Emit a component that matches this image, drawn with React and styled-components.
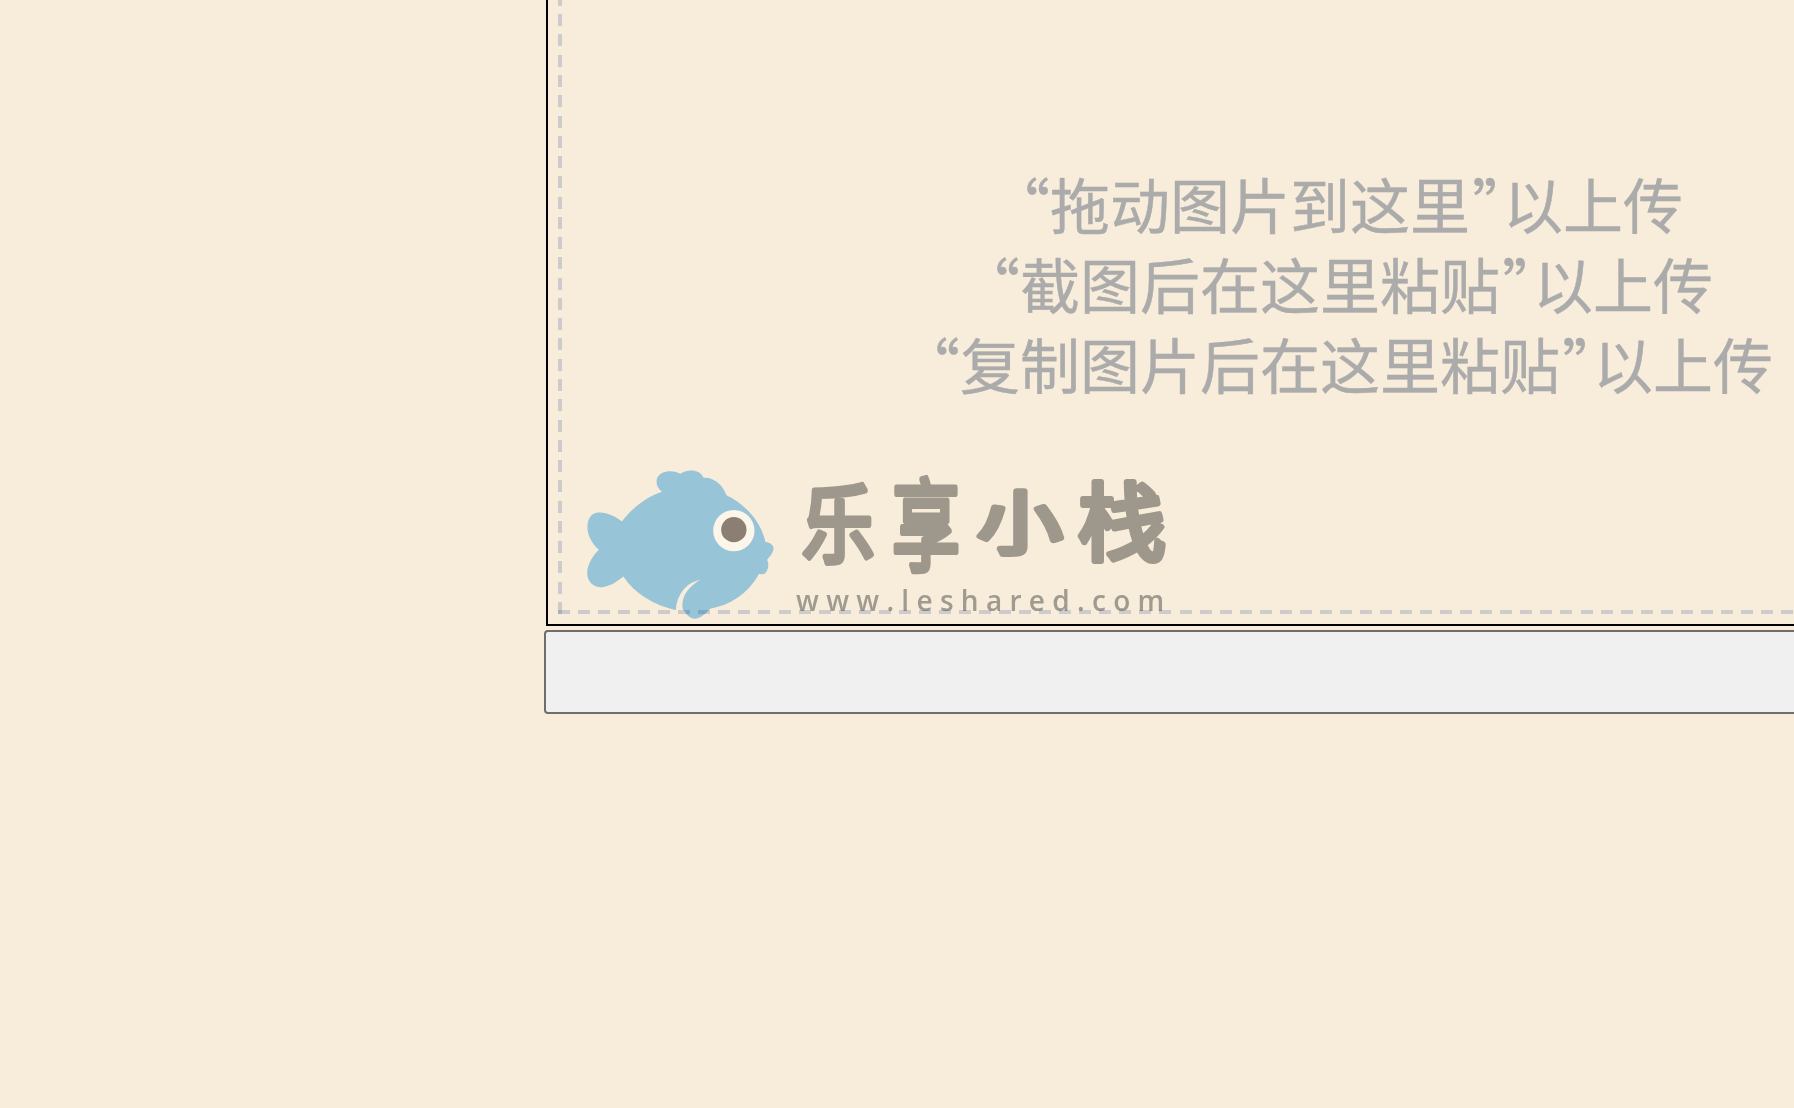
import React from 'react';
import styled, { createGlobalStyle } from 'styled-components';

const GlobalStyle = createGlobalStyle`
  html, body {
    margin: 0;
    height: 100%;
    overflow: hidden;
    background: #f8ecdb;
  }
`;

const Page = styled.div`
  display: flex;
  flex-direction: column;
  align-items: flex-start;
  gap: 4px;
  height: 1108px;
  padding-left: 544px;
  overflow: hidden;
  font-family: "Noto Sans CJK SC", "Noto Sans", sans-serif;
`;

const DropZone = styled.section`
  flex: none;
  box-sizing: border-box;
  width: 1581px;
  height: 626px;
  margin-left: 2px;
  padding: 0 10px 10px;
  border: 2px solid #000;
  border-top: 0;
`;

const DashedArea = styled.div`
  position: relative;
  box-sizing: border-box;
  height: 100%;
  padding: 163px 0 0 29px;

  &::before,
  &::after {
    content: '';
    position: absolute;
    left: 0;
    bottom: 0;
    mix-blend-mode: multiply;
  }
  &::before {
    top: 0;
    width: 4px;
    background: repeating-linear-gradient(to top, #d3dced 0 12px, transparent 12px 20.27px);
  }
  &::after {
    right: 0;
    height: 4px;
    background: repeating-linear-gradient(to right, #d3dced 0 12px, transparent 12px 20.05px);
  }
`;

const Hint = styled.p`
  margin: 0 0 0 -29px;
  font-size: 60px;
  line-height: 80px;
  text-align: center;
  color: #ababab;
  -webkit-text-stroke: 0.4px #ababab;
`;

const CloseQuote = styled.span`
  font-feature-settings: "palt";
  padding-left: 3px;
`;

const Logo = styled.div`
  display: flex;
  align-items: flex-start;
  gap: 22px;
  margin-top: 66px;
`;

const FishMark = styled.svg`
  flex: none;
  display: block;
  width: 187px;
  height: 150px;
`;

const LogoText = styled.div`
  display: flex;
  flex-direction: column;
  margin-top: -4px;
`;

const LogoName = styled.svg`
  display: block;
  width: 370px;
  height: 110px;
  margin: 0 0 10px 4px;
  overflow: visible;
`;

const LogoChar = styled.text`
  font-size: ${(p) => p.$size}px;
  font-weight: 400;
  text-anchor: middle;
  fill: #9e988c;
  stroke: #9e988c;
  stroke-width: 6px;
  stroke-linejoin: round;
  stroke-linecap: round;
`;

const LogoUrl = styled.div`
  font-family: "Open Sans", sans-serif;
  font-size: 28px;
  line-height: 30px;
  font-weight: 600;
  letter-spacing: 7.3px;
  white-space: nowrap;
  color: #a09b90;
`;

const Toolbar = styled.div`
  flex: none;
  box-sizing: border-box;
  width: 1620px;
  height: 84px;
  background: #f0f0f1;
  border: 2px solid #706d6a;
  border-radius: 4px;
`;

const Fish = () => (
  <FishMark viewBox="172 86 560 450">
    <g fill="#97c4d6">
      <path d="M275 245C305 205 345 172 395 155L590 165C650 195 695 245 708 310C708 350 700 380 688 400C655 460 600 495 540 505L440 510C370 495 315 460 280 408Z" />
      <path d="M285 250C255 225 222 212 197 218C172 225 168 262 178 288C186 306 196 320 207 328C190 345 172 372 172 398C173 428 195 444 222 440C245 436 265 422 285 405Z" />
      <path d="M405 160C385 150 376 130 382 113C390 92 425 86 452 100C475 85 510 86 521 112C555 110 580 135 592 170Z" />
      <path d="M700 305C715 303 732 312 731 325C729 340 718 350 712 358C720 375 713 400 697 402C685 402 680 395 678 385Z" />
      <path d="M456 480C456 515 478 536 495 535C515 533 530 518 545 500Z" />
    </g>
    <path d="M511 418C466 428 440 465 438 512L460 510C450 470 478 438 511 418Z" fill="#f8ecdb" />
    <circle cx="612" cy="271" r="62" fill="#fbf5ea" />
    <circle cx="612" cy="268" r="38" fill="#8a7f72" />
  </FishMark>
);

// x, y = centre and baseline of each character, size and stretch of the lettering
const logoChars = [
  { ch: '乐', x: 38, y: 91, size: 85, sx: 0.85 },
  { ch: '享', x: 126, y: 98, size: 100, sx: 0.68 },
  { ch: '小', x: 220, y: 83, size: 68, sx: 1.25 },
  { ch: '栈', x: 322, y: 89, size: 85, sx: 1.04 },
];

const App = () => (
  <>
    <GlobalStyle />
    <Page>
      <DropZone>
        <DashedArea>
          <Hint>
            “拖动图片到这里<CloseQuote>”</CloseQuote>以上传
            <br />
            “截图后在这里粘贴<CloseQuote>”</CloseQuote>以上传
            <br />
            “复制图片后在这里粘贴<CloseQuote>”</CloseQuote>以上传
          </Hint>
          <Logo>
            <Fish />
            <LogoText>
              <LogoName viewBox="0 0 370 110">
                {logoChars.map((c) => (
                  <LogoChar key={c.ch} $size={c.size} transform={`translate(${c.x} ${c.y}) scale(${c.sx} 1)`}>
                    {c.ch}
                  </LogoChar>
                ))}
              </LogoName>
              <LogoUrl>www.leshared.com</LogoUrl>
            </LogoText>
          </Logo>
        </DashedArea>
      </DropZone>
      <Toolbar />
    </Page>
  </>
);

export default App;
